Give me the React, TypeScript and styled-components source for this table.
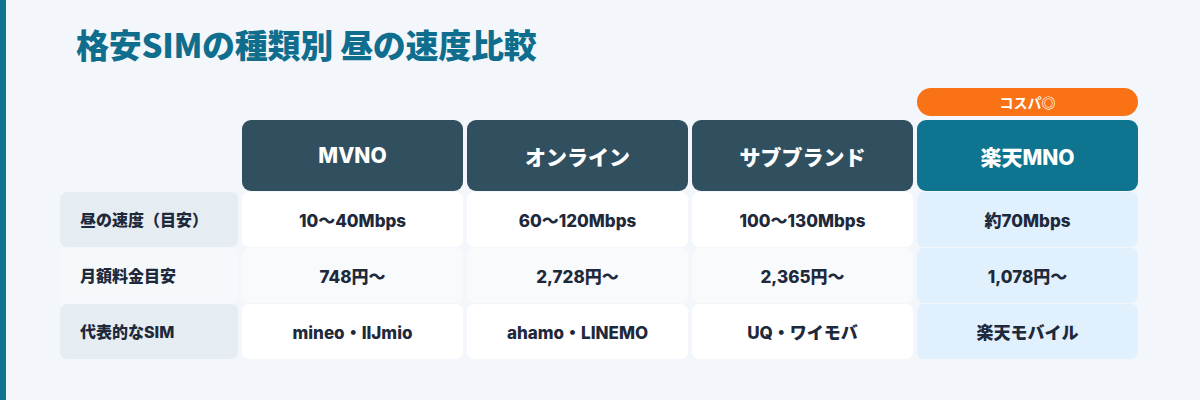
import React from 'react';
import styled, { createGlobalStyle } from 'styled-components';

const GlobalStyle = createGlobalStyle`
  html, body {
    margin: 0;
    padding: 0;
    background: #f3f6fa;
  }
  body {
    font-family: Inter, "Noto Sans CJK JP", sans-serif;
    color: #1e293b;
  }
`;

const Page = styled.div`
  width: 1200px;
  height: 400px;
  box-sizing: border-box;
  border-left: 6px solid #0e7490;
  padding: 21px 0 0 54px;
  background: #f3f6fa;
`;

const Title = styled.h1`
  margin: 0;
  font-family: "Noto Sans CJK JP", sans-serif;
  font-size: 33px;
  font-weight: 900;
  line-height: 46px;
  color: #0f6e8d;
  padding-left: 16px;
  letter-spacing: -0.3px;
`;

const Table = styled.div`
  margin-top: 21px;
  display: grid;
  grid-template-columns: 178px repeat(4, 221px);
  grid-template-rows: 28px 75px repeat(3, 56px);
  column-gap: 4px;
`;

const Empty = styled.div``;

const Badge = styled.div`
  height: 28px;
  border-radius: 14px;
  background: #f97316;
  color: #fff;
  font-size: 14px;
  font-weight: 700;
  display: flex;
  align-items: center;
  justify-content: center;
`;

const HeadCell = styled.div<{ $accent?: boolean }>`
  margin-top: 4px;
  border-radius: 9px;
  background: ${(p) => (p.$accent ? '#0e7490' : '#31505f')};
  color: #fff;
  font-size: 21px;
  font-weight: 800;
  display: flex;
  align-items: center;
  justify-content: center;
`;

const LabelCell = styled.div<{ $alt?: boolean }>`
  border-radius: 7px;
  margin: 0.5px 0;
  background: ${(p) => (p.$alt ? '#f6f9fb' : '#e6edf2')};
  font-size: 16px;
  font-weight: 800;
  display: flex;
  align-items: center;
  padding-left: 20px;
`;

const DataCell = styled.div<{ $alt?: boolean; $accent?: boolean }>`
  border-radius: 7px;
  margin: 0.5px 0;
  background: ${(p) => (p.$accent ? '#e1f0fd' : p.$alt ? '#f8fafc' : '#ffffff')};
  font-size: 17px;
  font-weight: 800;
  display: flex;
  align-items: center;
  justify-content: center;
`;

const columns = ['MVNO', 'オンライン', 'サブブランド', '楽天MNO'];

const rows = [
  { label: '昼の速度（目安）', values: ['10〜40Mbps', '60〜120Mbps', '100〜130Mbps', '約70Mbps'] },
  { label: '月額料金目安', values: ['748円〜', '2,728円〜', '2,365円〜', '1,078円〜'] },
  { label: '代表的なSIM', values: ['mineo・IIJmio', 'ahamo・LINEMO', 'UQ・ワイモバ', '楽天モバイル'] },
];

export default function App() {
  return (
    <>
      <GlobalStyle />
      <Page>
        <Title>格安SIMの種類別 昼の速度比較</Title>
        <Table>
          <Empty />
          <Empty />
          <Empty />
          <Empty />
          <Badge>コスパ◎</Badge>

          <Empty />
          {columns.map((c, i) => (
            <HeadCell key={c} $accent={i === 3}>
              {c}
            </HeadCell>
          ))}

          {rows.map((r, ri) => (
            <React.Fragment key={r.label}>
              <LabelCell $alt={ri === 1}>{r.label}</LabelCell>
              {r.values.map((v, i) => (
                <DataCell key={v} $alt={ri === 1} $accent={i === 3}>
                  {v}
                </DataCell>
              ))}
            </React.Fragment>
          ))}
        </Table>
      </Page>
    </>
  );
}
